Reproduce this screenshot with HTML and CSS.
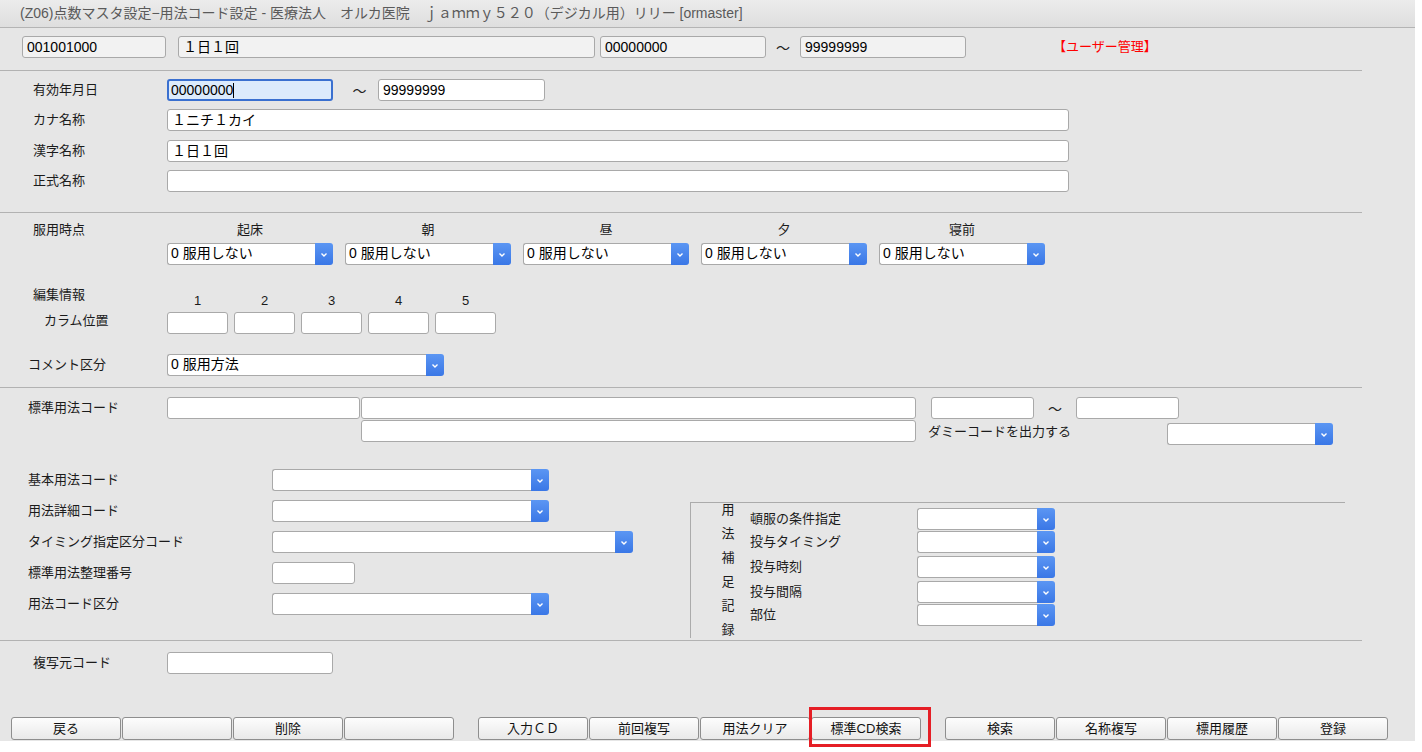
FILE: index.html
```html
<!DOCTYPE html>
<html lang="ja">
<head>
<meta charset="utf-8">
<title>用法コード設定</title>
<link rel="stylesheet" href="styles.css">
</head>
<body>
<div class="page">
  <div class="titlebar">(Z06)点数マスタ設定−用法コード設定 - 医療法人　オルカ医院　ｊａｍｍｙ５２０（デジカル用）リリー [ormaster]</div>

  <div class="toprow">
    <div class="fld ro w144">001001000</div>
    <div class="fld ro w417 ml12">１日１回</div>
    <div class="fld ro w166 ml5">00000000</div>
    <span class="tilde w34">～</span>
    <div class="fld ro w166">99999999</div>
    <span class="red">【ユーザー管理】</span>
  </div>
  <div class="sep sep12"></div>

  <div class="sec1">
    <div class="row"><span class="lbl la">有効年月日</span><div class="fld focus w166">00000000<span class="caret"></span></div><span class="tilde t1">～</span><div class="fld w167">99999999</div></div>
    <div class="row"><span class="lbl la">カナ名称</span><div class="fld w902">１ニチ１カイ</div></div>
    <div class="row mt1"><span class="lbl la">漢字名称</span><div class="fld w902">１日１回</div></div>
    <div class="row"><span class="lbl la">正式名称</span><div class="fld w902"></div></div>
  </div>
  <div class="sep sep20"></div>

  <div class="sec2">
    <div class="hrow"><span class="lbl la">服用時点</span>
      <div class="g5"><span>起床</span><span>朝</span><span>昼</span><span>夕</span><span>寝前</span></div>
    </div>
    <div class="row srow"><span class="lbl la"></span>
      <div class="g5">
        <div class="sel"><div class="txt">0 服用しない</div><div class="arr"><svg width="8" height="6" viewBox="0 0 8 6"><path d="M1.5 1.5 L4 4 L6.5 1.5" fill="none" stroke="#fff" stroke-width="1.4"/></svg></div></div>
        <div class="sel"><div class="txt">0 服用しない</div><div class="arr"><svg width="8" height="6" viewBox="0 0 8 6"><path d="M1.5 1.5 L4 4 L6.5 1.5" fill="none" stroke="#fff" stroke-width="1.4"/></svg></div></div>
        <div class="sel"><div class="txt">0 服用しない</div><div class="arr"><svg width="8" height="6" viewBox="0 0 8 6"><path d="M1.5 1.5 L4 4 L6.5 1.5" fill="none" stroke="#fff" stroke-width="1.4"/></svg></div></div>
        <div class="sel"><div class="txt">0 服用しない</div><div class="arr"><svg width="8" height="6" viewBox="0 0 8 6"><path d="M1.5 1.5 L4 4 L6.5 1.5" fill="none" stroke="#fff" stroke-width="1.4"/></svg></div></div>
        <div class="sel"><div class="txt">0 服用しない</div><div class="arr"><svg width="8" height="6" viewBox="0 0 8 6"><path d="M1.5 1.5 L4 4 L6.5 1.5" fill="none" stroke="#fff" stroke-width="1.4"/></svg></div></div>
      </div>
    </div>

    <div class="edit">
      <div class="ecol1"><div class="eh">編集情報</div><div class="ec">カラム位置</div></div>
      <div class="ecol2">
        <div class="nums"><span>1</span><span>2</span><span>3</span><span>4</span><span>5</span></div>
        <div class="boxes"><div class="fld"></div><div class="fld"></div><div class="fld"></div><div class="fld"></div><div class="fld"></div></div>
      </div>
    </div>

    <div class="row crow"><span class="lbl lb">コメント区分</span>
      <div class="sel w277"><div class="txt">0 服用方法</div><div class="arr"><svg width="8" height="6" viewBox="0 0 8 6"><path d="M1.5 1.5 L4 4 L6.5 1.5" fill="none" stroke="#fff" stroke-width="1.4"/></svg></div></div>
    </div>
  </div>
  <div class="sep sep11"></div>

  <div class="sec3">
    <div class="row"><span class="lbl lb">標準用法コード</span>
      <div class="fld w193"></div><div class="fld w555 ml1"></div><div class="fld w103 ml15"></div><span class="tilde w42">～</span><div class="fld w103"></div>
    </div>
    <div class="rowb">
      <div class="fld w555"></div>
      <span class="dummy">ダミーコードを出力する</span>
      <div class="sel w166 mt3"><div class="txt"></div><div class="arr"><svg width="8" height="6" viewBox="0 0 8 6"><path d="M1.5 1.5 L4 4 L6.5 1.5" fill="none" stroke="#fff" stroke-width="1.4"/></svg></div></div>
    </div>

    <div class="lower">
      <div class="left">
        <div class="row"><span class="lbl lc">基本用法コード</span><div class="sel w277"><div class="txt"></div><div class="arr"><svg width="8" height="6" viewBox="0 0 8 6"><path d="M1.5 1.5 L4 4 L6.5 1.5" fill="none" stroke="#fff" stroke-width="1.4"/></svg></div></div></div>
        <div class="row"><span class="lbl lc">用法詳細コード</span><div class="sel w277"><div class="txt"></div><div class="arr"><svg width="8" height="6" viewBox="0 0 8 6"><path d="M1.5 1.5 L4 4 L6.5 1.5" fill="none" stroke="#fff" stroke-width="1.4"/></svg></div></div></div>
        <div class="row"><span class="lbl lc">タイミング指定区分コード</span><div class="sel w361"><div class="txt"></div><div class="arr"><svg width="8" height="6" viewBox="0 0 8 6"><path d="M1.5 1.5 L4 4 L6.5 1.5" fill="none" stroke="#fff" stroke-width="1.4"/></svg></div></div></div>
        <div class="row"><span class="lbl lc">標準用法整理番号</span><div class="fld w83"></div></div>
        <div class="row"><span class="lbl lc">用法コード区分</span><div class="sel w277"><div class="txt"></div><div class="arr"><svg width="8" height="6" viewBox="0 0 8 6"><path d="M1.5 1.5 L4 4 L6.5 1.5" fill="none" stroke="#fff" stroke-width="1.4"/></svg></div></div></div>
      </div>
      <div class="panel">
        <div class="vert"><span>用</span><span>法</span><span>補</span><span>足</span><span>記</span><span>録</span></div>
        <div class="prows">
          <div class="prow p1"><span class="plbl">頓服の条件指定</span><div class="sel w138"><div class="txt"></div><div class="arr"><svg width="8" height="6" viewBox="0 0 8 6"><path d="M1.5 1.5 L4 4 L6.5 1.5" fill="none" stroke="#fff" stroke-width="1.4"/></svg></div></div></div>
          <div class="prow p2"><span class="plbl">投与タイミング</span><div class="sel w138"><div class="txt"></div><div class="arr"><svg width="8" height="6" viewBox="0 0 8 6"><path d="M1.5 1.5 L4 4 L6.5 1.5" fill="none" stroke="#fff" stroke-width="1.4"/></svg></div></div></div>
          <div class="prow p3"><span class="plbl">投与時刻</span><div class="sel w138"><div class="txt"></div><div class="arr"><svg width="8" height="6" viewBox="0 0 8 6"><path d="M1.5 1.5 L4 4 L6.5 1.5" fill="none" stroke="#fff" stroke-width="1.4"/></svg></div></div></div>
          <div class="prow p3"><span class="plbl">投与間隔</span><div class="sel w138"><div class="txt"></div><div class="arr"><svg width="8" height="6" viewBox="0 0 8 6"><path d="M1.5 1.5 L4 4 L6.5 1.5" fill="none" stroke="#fff" stroke-width="1.4"/></svg></div></div></div>
          <div class="prow p2"><span class="plbl">部位</span><div class="sel w138"><div class="txt"></div><div class="arr"><svg width="8" height="6" viewBox="0 0 8 6"><path d="M1.5 1.5 L4 4 L6.5 1.5" fill="none" stroke="#fff" stroke-width="1.4"/></svg></div></div></div>
        </div>
      </div>
    </div>
  </div>
  <div class="sep sep2"></div>

  <div class="sec4">
    <div class="row"><span class="lbl la">複写元コード</span><div class="fld w166"></div></div>
  </div>

  <div class="btns">
    <div class="grp">
      <button class="btn">戻る</button><button class="btn"></button><button class="btn">削除</button><button class="btn"></button>
    </div>
    <div class="grp">
      <button class="btn">入力ＣＤ</button><button class="btn">前回複写</button><button class="btn">用法クリア</button><button class="btn marked">標準CD検索<span class="mark"></span></button>
    </div>
    <div class="grp">
      <button class="btn">検索</button><button class="btn">名称複写</button><button class="btn">標用履歴</button><button class="btn">登録</button>
    </div>
  </div>
</div>
</body>
</html>
```

FILE: styles.css
```css
html, body {
  margin: 0;
  padding: 0;
  background: #ffffff;
}
body {
  min-height: 752px;
  font-family: "Liberation Sans", "Noto Sans CJK JP", sans-serif;
  font-size: 13px;
  color: #1b1b1b;
}
.page {
  position: relative;
  width: 1415px;
  height: 741px;
  background: #e6e6e6;
}
.titlebar {
  height: 27px;
  line-height: 27px;
  padding-left: 20px;
  border-bottom: 1px solid #b4b4b4;
  background: linear-gradient(#ececec, #dedede);
  color: #5a5a5a;
  font-size: 14px;
  white-space: nowrap;
}
.toprow {
  display: flex;
  align-items: center;
  height: 22px;
  margin-top: 8px;
  padding-left: 22px;
}
.fld {
  flex: none;
  box-sizing: border-box;
  height: 22px;
  border: 1px solid #a9a9a9;
  border-radius: 3px;
  background: #ffffff;
  font-size: 14px;
  line-height: 20px;
  padding-left: 4px;
  white-space: nowrap;
  overflow: hidden;
  color: #000;
}
.ro { background: #f2f2f2; }
.focus {
  background: #dcebfc;
  border: 2px solid #3a70d0;
  line-height: 18px;
  padding-left: 2px;
}
.caret {
  display: inline-block;
  width: 1px;
  height: 15px;
  background: #000;
  vertical-align: -3px;
}
.tilde {
  flex: none;
  text-align: center;
  font-size: 14px;
  color: #222;
}
.w34 { width: 34px; }
.w42 { width: 42px; }
.t1 { width: 37px; padding-left: 8px; }
.red {
  color: #ff0000;
  margin-left: 87px;
  font-size: 13px;
  margin-top: -3px;
}
.w83 { width: 83px; }
.w103 { width: 103px; }
.w138 { width: 138px; }
.w144 { width: 144px; }
.w166 { width: 166px; }
.w167 { width: 167px; }
.w193 { width: 193px; }
.w277 { width: 277px; }
.w361 { width: 361px; }
.w417 { width: 417px; }
.w555 { width: 555px; }
.w902 { width: 902px; }
.ml1 { margin-left: 1px; }
.ml5 { margin-left: 5px; }
.ml12 { margin-left: 12px; }
.ml15 { margin-left: 15px; }
.mt1 { margin-top: 1px; }
.mt3 { margin-top: 3px; }

.sep {
  width: 1362px;
  height: 1px;
  background: #b2b2b2;
}
.sep12 { margin-top: 12px; }
.sep20 { margin-top: 20px; }
.sep11 { margin-top: 11px; }
.sep2 { margin-top: 2px; }

.row {
  display: flex;
  align-items: center;
  height: 22px;
}
.lbl {
  flex: none;
  box-sizing: border-box;
  white-space: nowrap;
  margin-top: -3px;
}
.la { width: 167px; padding-left: 33px; }
.lb { width: 167px; padding-left: 28px; }
.lc { width: 272px; padding-left: 28px; }

.sec1 {
  display: flex;
  flex-direction: column;
  gap: 8px;
  padding-top: 8px;
}

.sec2 { padding-top: 9px; }
.hrow {
  display: flex;
  height: 16px;
  line-height: 16px;
}
.hrow .lbl { margin-top: 0; }
.g5 {
  display: grid;
  grid-template-columns: repeat(5, 166px);
  column-gap: 12px;
}
.hrow .g5 span { text-align: center; }
.srow { margin-top: 5px; }

.sel {
  flex: none;
  display: flex;
  height: 22px;
  box-sizing: border-box;
}
.sel .txt {
  flex: 1;
  min-width: 0;
  box-sizing: border-box;
  height: 22px;
  border: 1px solid #a9a9a9;
  border-right: none;
  border-radius: 3px 0 0 3px;
  background: #ffffff;
  font-size: 14px;
  line-height: 19px;
  padding-left: 3px;
  white-space: nowrap;
  overflow: hidden;
  color: #000;
}
.sel .arr {
  flex: none;
  width: 18px;
  height: 22px;
  border-radius: 0 3px 3px 0;
  background: linear-gradient(#5b96f3, #3a77e6);
  display: flex;
  align-items: center;
  justify-content: center;
}
.sel .arr svg { margin-top: 2px; }

.edit {
  display: flex;
  margin-top: 22px;
}
.ecol1 {
  width: 167px;
  box-sizing: border-box;
  padding-left: 33px;
}
.eh { line-height: 16px; height: 16px; }
.ec { line-height: 16px; margin-top: 10px; padding-left: 11px; }
.ecol2 { padding-top: 6px; }
.nums, .boxes {
  display: grid;
  grid-template-columns: repeat(5, 61px);
  column-gap: 6px;
}
.nums span {
  text-align: center;
  line-height: 16px;
  font-size: 13px;
}
.boxes { margin-top: 3px; }

.crow { margin-top: 20px; }

.sec3 { padding-top: 9px; }
.rowb {
  display: flex;
  align-items: flex-start;
  margin-top: 1px;
  padding-left: 361px;
}
.dummy {
  width: 251px;
  box-sizing: border-box;
  padding-left: 12px;
  padding-top: 4px;
  line-height: 16px;
  white-space: nowrap;
}

.lower {
  display: flex;
  margin-top: 24px;
}
.left {
  width: 690px;
  flex: none;
  display: flex;
  flex-direction: column;
  gap: 9px;
}
.panel {
  flex: none;
  width: 655px;
  height: 136px;
  margin-top: 33px;
  box-sizing: border-box;
  border-top: 1px solid #ababab;
  border-left: 1px solid #ababab;
  display: flex;
}
.vert {
  display: flex;
  flex-direction: column;
  width: 16px;
  margin-left: 29px;
  margin-top: -5px;
}
.vert span {
  line-height: 24px;
  height: 24px;
  text-align: center;
}
.prows {
  margin-left: 14px;
  display: flex;
  flex-direction: column;
}
.prow {
  display: flex;
  align-items: center;
  height: 22px;
}
.p1 { margin-top: 5px; }
.p2 { margin-top: 1px; }
.p3 { margin-top: 3px; }
.plbl {
  width: 167px;
  flex: none;
  white-space: nowrap;
  margin-top: -3px;
}

.sec4 { padding-top: 11px; }

.btns {
  display: flex;
  margin-top: 43px;
  padding-left: 11px;
}
.grp {
  display: flex;
  gap: 1px;
}
.grp + .grp { margin-left: 24px; }
.btn {
  position: relative;
  width: 110px;
  height: 23px;
  margin: 0;
  padding: 0;
  box-sizing: border-box;
  border: 1px solid #8e8e8e;
  border-radius: 3px;
  background: linear-gradient(#fdfdfd, #e9e9e9);
  font-family: "Liberation Sans", "Noto Sans CJK JP", sans-serif;
  font-size: 13px;
  color: #111;
  line-height: 21px;
}
.mark {
  position: absolute;
  left: -3px;
  top: -11px;
  width: 122px;
  height: 40px;
  box-sizing: border-box;
  border: 3px solid #e51e25;
  pointer-events: none;
}
```
